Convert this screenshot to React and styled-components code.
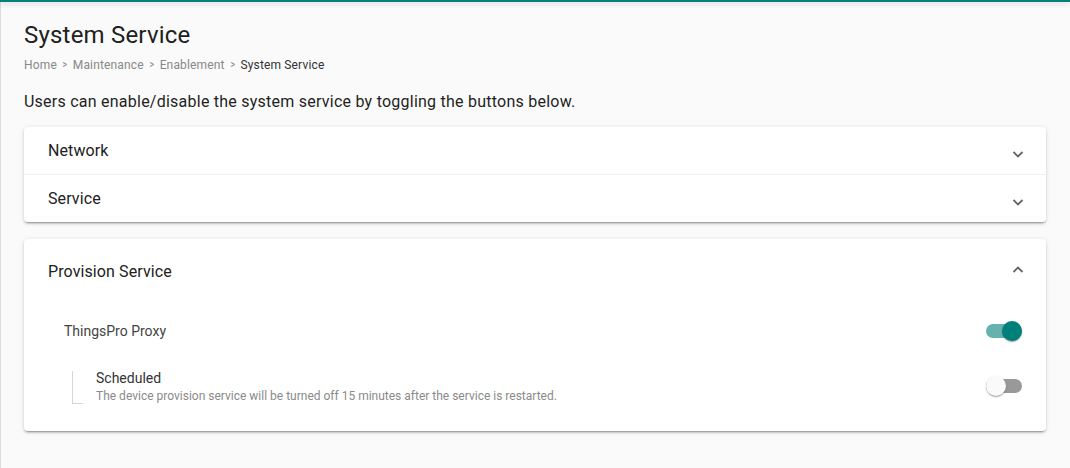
import { createGlobalStyle } from "styled-components";
import styled from "styled-components";

const GlobalStyle = createGlobalStyle`
  html, body {
    margin: 0;
    padding: 0;
    background: #fafafa;
    font-family: Roboto, "Noto Sans", sans-serif;
  }
`;

const Chevron = ({ up }) => (
  <svg width="14" height="14" viewBox="0 0 14 14">
    <path
      d={up ? "M2.5 9 L7 4.5 L11.5 9" : "M2.5 5 L7 9.5 L11.5 5"}
      fill="none"
      stroke="#666"
      strokeWidth="1.8"
    />
  </svg>
);

const App = () => {
  return (
    <Page>
      <GlobalStyle />
      <TopBar />
      <Content>
        <Title>System Service</Title>
        <Breadcrumb>
          <Crumb>Home</Crumb>
          <Sep>&gt;</Sep>
          <Crumb>Maintenance</Crumb>
          <Sep>&gt;</Sep>
          <Crumb>Enablement</Crumb>
          <Sep>&gt;</Sep>
          <Crumb current>System Service</Crumb>
        </Breadcrumb>
        <Description>
          Users can enable/disable the system service by toggling the buttons below.
        </Description>

        <Card>
          <PanelHeader>
            <span>Network</span>
            <Indicator>
              <Chevron />
            </Indicator>
          </PanelHeader>
          <Divider />
          <PanelHeader>
            <span>Service</span>
            <Indicator>
              <Chevron />
            </Indicator>
          </PanelHeader>
        </Card>

        <Card expanded>
          <PanelHeader expanded>
            <span>Provision Service</span>
            <Indicator up>
              <Chevron up />
            </Indicator>
          </PanelHeader>
          <PanelBody>
            <ServiceRow>
              <ServiceName>ThingsPro Proxy</ServiceName>
              <Toggle checked />
            </ServiceRow>
            <SubRow>
              <Branch />
              <SubText>
                <SubName>Scheduled</SubName>
                <SubHint>
                  The device provision service will be turned off 15 minutes after the service is restarted.
                </SubHint>
              </SubText>
              <Toggle />
            </SubRow>
          </PanelBody>
        </Card>
      </Content>
    </Page>
  );
};

const Toggle = ({ checked }) => (
  <ToggleWrap>
    <Track checked={checked} />
    <Thumb checked={checked} />
  </ToggleWrap>
);

export default App;

//styles
const Page = styled.div`
  min-height: 468px;
  background: #fafafa;
`;
const TopBar = styled.div`
  height: 2px;
  background: #00807a;
  box-shadow: 0 2px 5px rgba(0, 0, 0, 0.18);
  position: relative;
  z-index: 1;
`;
const Content = styled.div`
  border-left: 1px solid #dcdcdc;
  min-height: 466px;
  box-sizing: border-box;
  padding: 17px 24px 0 23px;
  color: rgba(0, 0, 0, 0.87);
`;
const Title = styled.h1`
  margin: 0;
  font-size: 24px;
  font-weight: 400;
  line-height: 32px;
  letter-spacing: 0.2px;
  color: #212121;
`;
const Breadcrumb = styled.div`
  margin-top: 6px;
  display: flex;
  align-items: center;
  gap: 5px;
  font-size: 12px;
  line-height: 16px;
  letter-spacing: 0.15px;
`;
const Crumb = styled.span`
  color: ${(p) => (p.current ? "#333" : "#888")};
`;
const Sep = styled.span`
  color: #777;
  font-size: 11px;
  transform: scaleX(0.8);
`;
const Description = styled.p`
  margin: 17px 0 13px;
  font-size: 16px;
  line-height: 24px;
  letter-spacing: 0.24px;
  color: #1f1f1f;
`;
const Card = styled.div`
  background: #fff;
  border-radius: 4px;
  box-shadow: 0 3px 1px -2px rgba(0, 0, 0, 0.2), 0 2px 2px 0 rgba(0, 0, 0, 0.14),
    0 1px 5px 0 rgba(0, 0, 0, 0.12);
  margin-bottom: ${(p) => (p.expanded ? "0" : "17px")};
`;
const PanelHeader = styled.div`
  height: ${(p) => (p.expanded ? "64px" : "47px")};
  padding: 0 24px;
  display: flex;
  align-items: center;
  justify-content: space-between;
  font-size: 16px;
  letter-spacing: 0.1px;
  color: #212121;
`;
const Indicator = styled.span`
  display: flex;
  margin-right: -3px;
  margin-top: ${(p) => (p.up ? "-3px" : "7px")};
`;
const Divider = styled.div`
  height: 1px;
  background: #f0f0f0;
`;
const PanelBody = styled.div`
  padding: 8px 24px 19px;
`;
const ServiceRow = styled.div`
  height: 40px;
  margin-left: 16px;
  display: flex;
  align-items: center;
  justify-content: space-between;
`;
const ServiceName = styled.span`
  font-size: 14px;
  color: #444;
`;
const SubRow = styled.div`
  margin-left: 24px;
  padding: 17px 0 8px;
  display: flex;
  align-items: center;
`;
const Branch = styled.div`
  align-self: flex-start;
  margin-top: 3px;
  width: 10px;
  height: 32px;
  border-left: 1px solid #d6d6d6;
  border-bottom: 1px solid #d6d6d6;
  flex-shrink: 0;
`;
const SubText = styled.div`
  flex: 1;
  margin-left: 13px;
  display: flex;
  flex-direction: column;
`;
const SubName = styled.span`
  font-size: 14px;
  line-height: 20px;
  color: #333;
`;
const SubHint = styled.span`
  font-size: 12px;
  line-height: 16px;
  color: #8a8a8a;
`;
const ToggleWrap = styled.div`
  position: relative;
  width: 36px;
  height: 20px;
  flex-shrink: 0;
`;
const Track = styled.div`
  position: absolute;
  left: 0;
  top: 3px;
  width: 36px;
  height: 14px;
  border-radius: 7px;
  background: ${(p) => (p.checked ? "#66b2ae" : "#999")};
`;
const Thumb = styled.div`
  position: absolute;
  top: 0;
  left: ${(p) => (p.checked ? "16px" : "0")};
  width: 20px;
  height: 20px;
  border-radius: 50%;
  background: ${(p) => (p.checked ? "#00807a" : "#fafafa")};
  box-shadow: 0 2px 1px -1px rgba(0, 0, 0, 0.2), 0 1px 1px 0 rgba(0, 0, 0, 0.14),
    0 1px 3px 0 rgba(0, 0, 0, 0.12);
`;
